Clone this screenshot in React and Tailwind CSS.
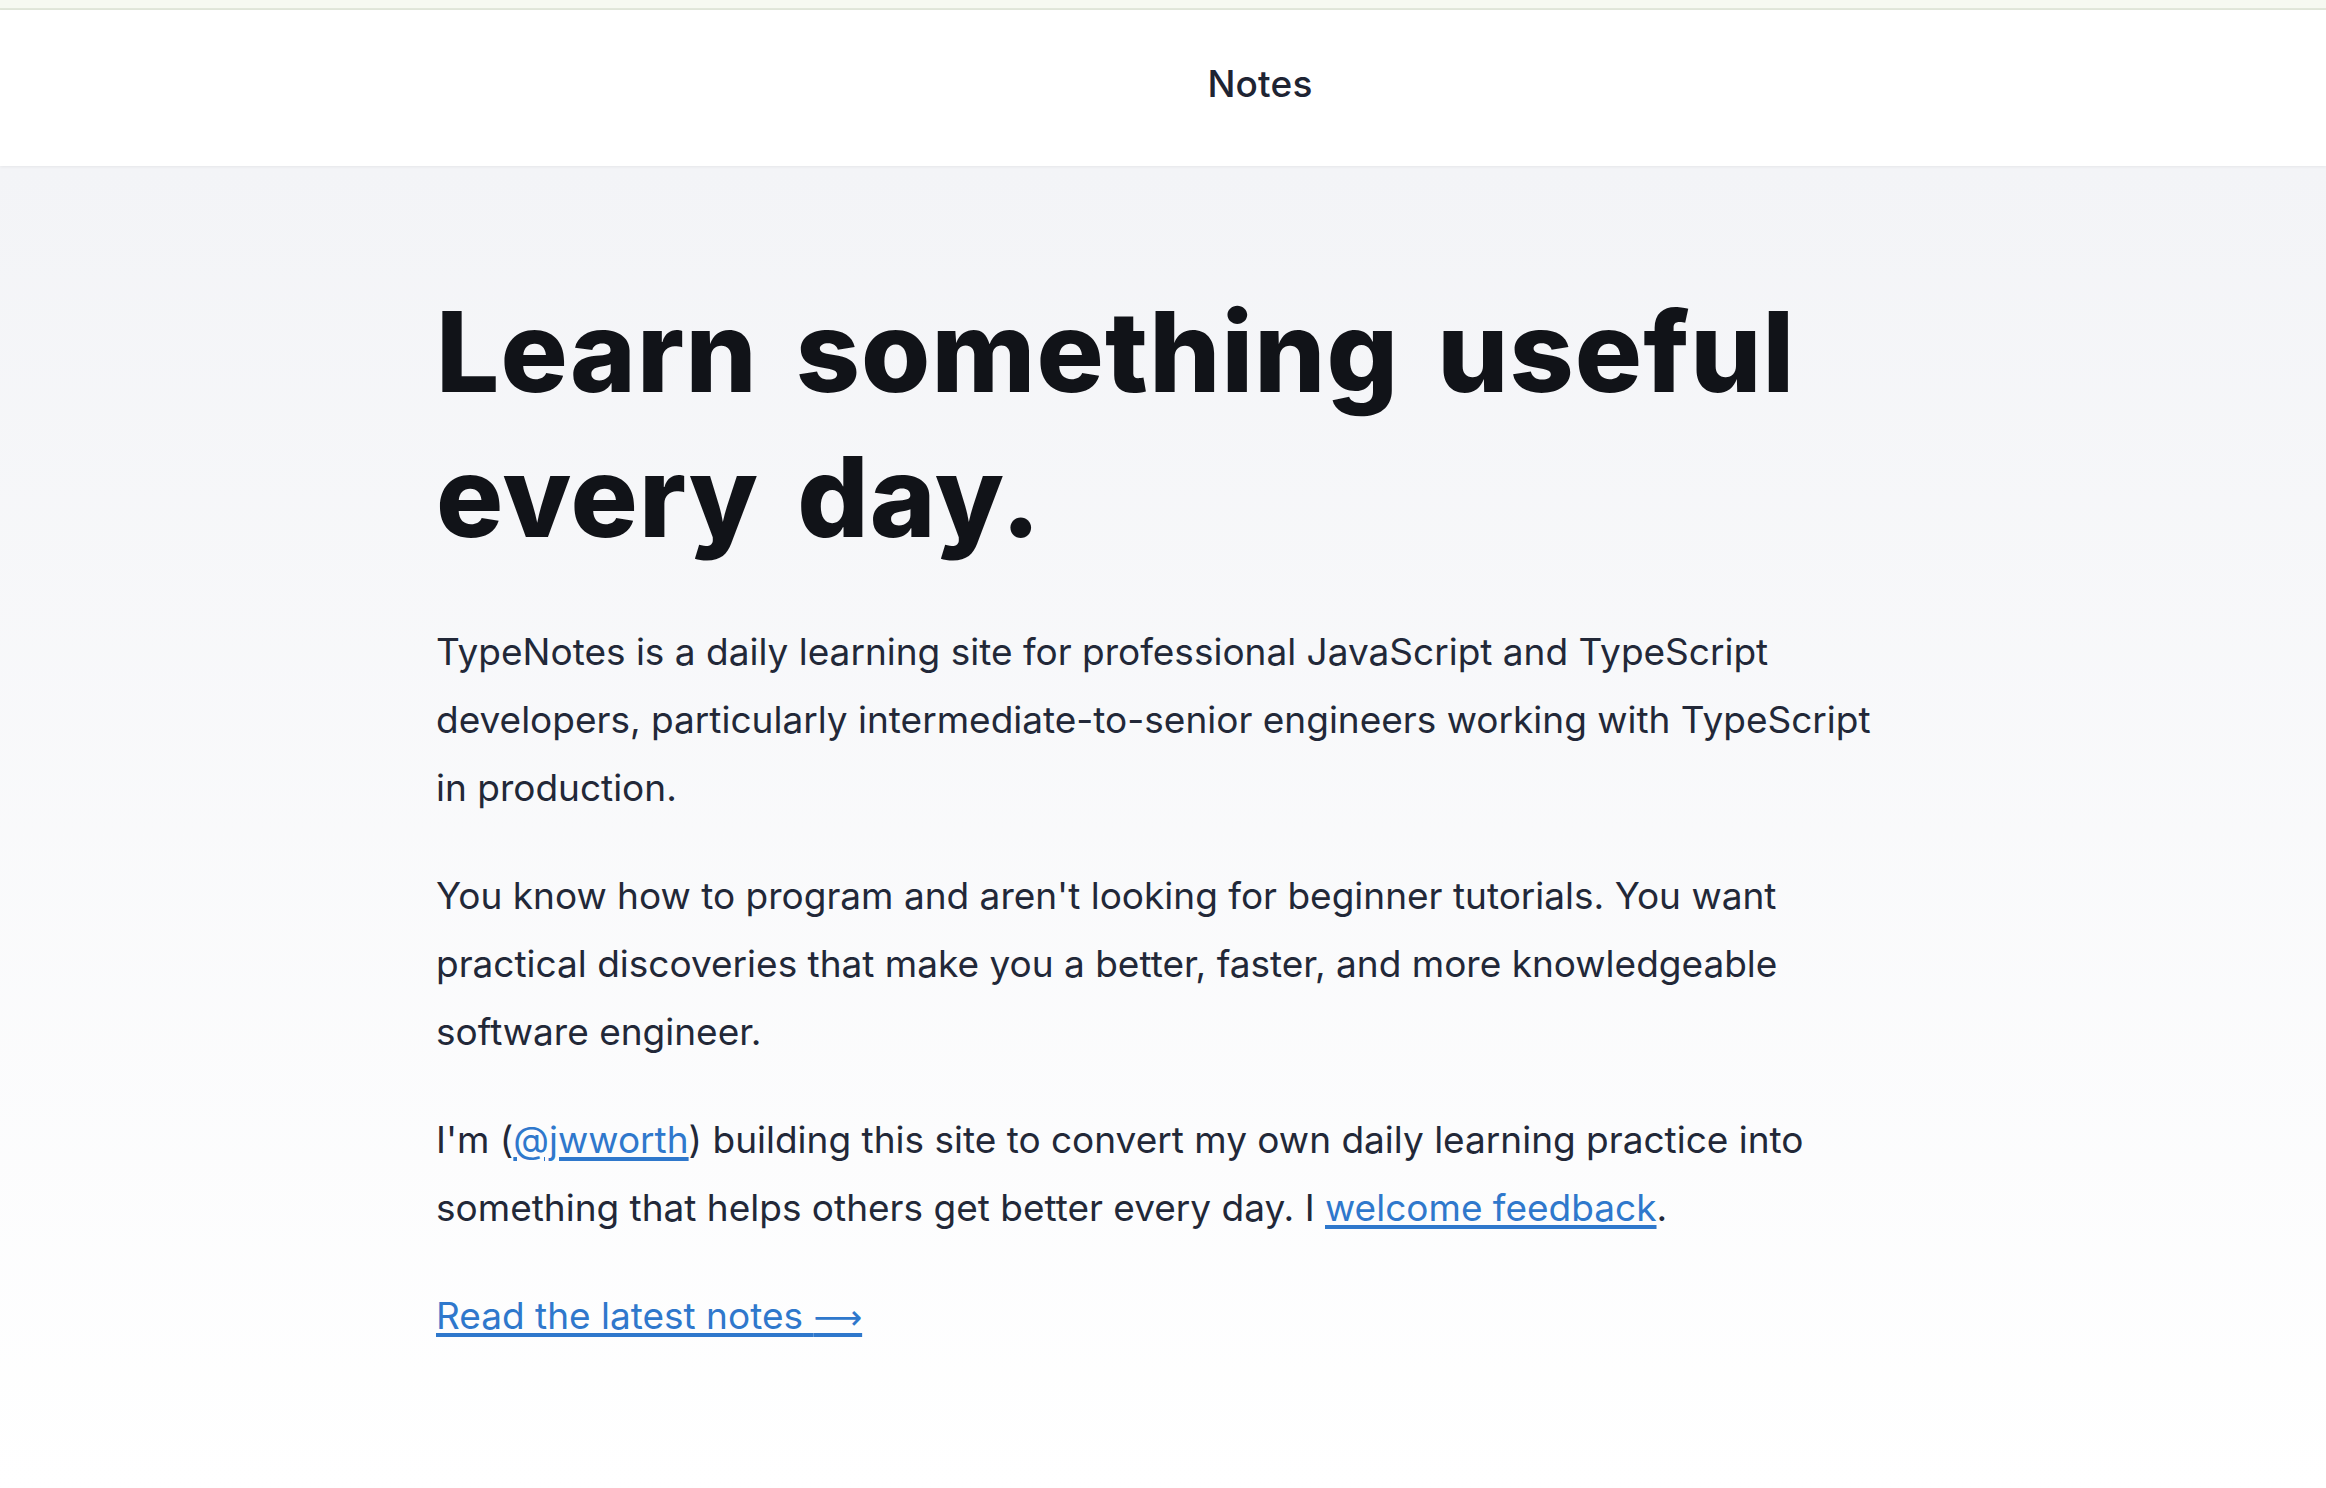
import React from 'react';

const font = { fontFamily: 'Inter, "Noto Sans", sans-serif' };

const linkClass = 'text-[#2f78cc] underline underline-offset-[4px] decoration-[4px]';

function Header() {
  return (
    <header className="bg-white shadow-[0_1px_3px_rgba(0,0,0,0.06)] relative z-10">
      <nav className="h-[156px] flex items-center justify-center pl-[194px] pb-[8px]">
        <a href="#" className="text-[37px] text-[#1e2433] font-medium tracking-[0.005em]">Notes</a>
      </nav>
    </header>
  );
}

function Intro() {
  return (
    <main className="flex-1 bg-gradient-to-b from-[#f3f4f7] to-white">
      <div className="w-[1454px] mx-auto pt-[113px] pb-[120px]">
        <h1 className="text-[112px] leading-[145px] font-extrabold text-[#111318] tracking-[0.01em] [word-spacing:0.11em]">
          Learn something useful every day.
        </h1>
        <div className="mt-[49px] text-[37px] leading-[68px] text-[#222838] flex flex-col gap-[40px]">
          <p>
            TypeNotes is a daily learning site for professional JavaScript and TypeScript developers,
            particularly intermediate-to-senior engineers working with TypeScript in production.
          </p>
          <p>
            You know how to program and aren't looking for beginner tutorials. You want practical
            discoveries that make you a better, faster, and more knowledgeable software engineer.
          </p>
          <p>
            I'm (<a href="#" className={linkClass}>@jwworth</a>) building this site to convert my own daily learning practice into
            something that helps others get better every day. I{' '}
            <a href="#" className={linkClass}>welcome feedback</a>.
          </p>
          <p>
            <a href="#" className={linkClass}>
              Read the latest notes{' '}
              <span className="font-['DejaVu_Sans',sans-serif] text-[34px]">⟶</span>
            </a>
          </p>
        </div>
      </div>
    </main>
  );
}

export default function App() {
  return (
    <div className="min-h-screen flex flex-col bg-white" style={font}>
      <div className="h-[10px] bg-[#f6f9f1] border-b-2 border-[#e1e7da]" />
      <Header />
      <Intro />
    </div>
  );
}
